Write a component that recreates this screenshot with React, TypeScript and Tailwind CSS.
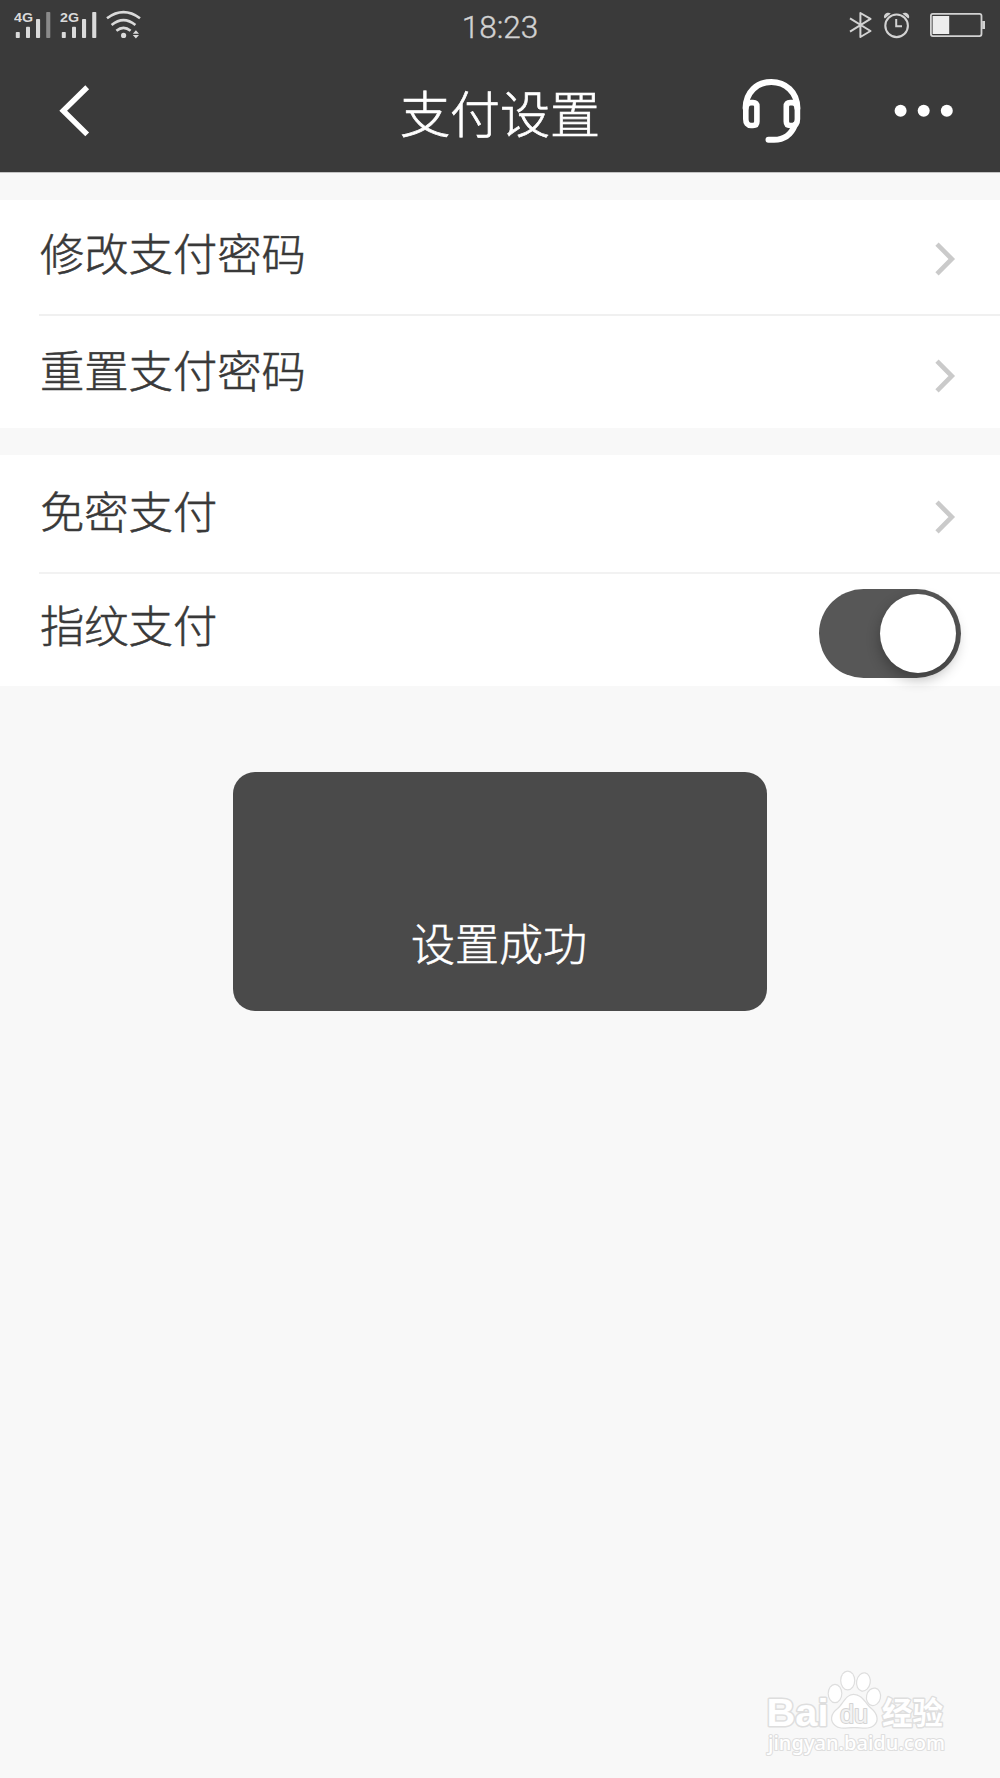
import type { ReactNode } from "react";

function Signal({ label, weakLast = false }: { label: string; weakLast?: boolean }) {
  return (
    <svg width="38" height="40" viewBox="0 0 38 40" className="shrink-0" fill="#dadada">
      <text x="0" y="22.4" fontSize="13.6" fontWeight="700" textLength="19" lengthAdjust="spacingAndGlyphs" fontFamily="Liberation Sans, Arial, sans-serif">
        {label}
      </text>
      <rect x="1.8" y="32" width="4" height="6" rx="0.8" />
      <rect x="12" y="26.7" width="4" height="11.3" rx="0.8" />
      <rect x="22" y="19" width="4.1" height="19" rx="0.8" />
      <rect x="32.2" y="12" width="4.1" height="26" rx="0.8" fill={weakLast ? "#8a8a8a" : "#dadada"} />
    </svg>
  );
}

function Wifi() {
  return (
    <svg width="36" height="40" viewBox="0 0 36 40" className="shrink-0" fill="none" stroke="#dadada" strokeWidth="2.6">
      <path d="M1 18.3Q17.5 6 34 18.3" />
      <path d="M5.6 24.9Q17.5 15.2 29.4 24.9" />
      <path d="M10.4 30.8Q17.5 25 24.6 30.8" />
      <circle cx="17.6" cy="35.4" r="2.6" fill="#dadada" stroke="none" />
      <path d="M26.8 33.8L29.9 30.2L33 33.8ZM26.8 35H33L29.9 38.6Z" fill="#dadada" stroke="none" />
    </svg>
  );
}

function Bluetooth() {
  return (
    <svg width="24" height="40" viewBox="0 0 24 40" className="shrink-0" fill="none" stroke="#d2d2d2" strokeWidth="2" strokeLinejoin="round">
      <path d="M1 18.4L21.5 31L11.4 37V13L21.5 18.9L1 31.6" />
    </svg>
  );
}

function Alarm() {
  return (
    <svg width="28" height="40" viewBox="0 0 28 40" className="shrink-0" fill="none" stroke="#d2d2d2">
      <circle cx="13.6" cy="25.8" r="11.3" strokeWidth="2.1" />
      <path d="M13.2 19V26.2H19" strokeWidth="2" />
      <path d="M1 17.5C0.6 14.2 4.4 11.6 7.8 13.5L1.9 18.6ZM26.2 17.5C26.6 14.2 22.8 11.6 19.4 13.5L25.3 18.6Z" fill="#d2d2d2" stroke="none" />
    </svg>
  );
}

function Battery() {
  return (
    <svg width="56" height="40" viewBox="0 0 56 40" className="shrink-0">
      <rect x="0.9" y="13.8" width="50.6" height="22.3" rx="2" fill="none" stroke="#d2d2d2" strokeWidth="1.8" />
      <rect x="2.6" y="16" width="16.6" height="18" fill="#ededed" />
      <rect x="52.2" y="21" width="2.8" height="8" fill="#d2d2d2" />
    </svg>
  );
}

function Headset() {
  return (
    <svg width="60" height="68" viewBox="0 0 60 68" fill="none" stroke="#fff" strokeWidth="6" strokeLinecap="round">
      <path d="M4.6 31C5 15 16 5 30.3 5S56 15 56.4 31" />
      <path d="M4.8 32C4.8 27 7 25.6 10 25.6H12Q15.9 25.6 15.9 29.5V44.5Q15.9 48.5 12 48.5H10Q4.8 48.5 4.8 42Z" strokeWidth="5.6" />
      <path d="M56.4 32C56.4 27 54 25.6 51.2 25.6H49.2Q45.3 25.6 45.3 29.5V44.5Q45.3 48.5 49.2 48.5H51.2Q56.4 48.5 56.4 42Z" strokeWidth="5.6" />
      <path d="M54 48C50 58 43 62.8 33 62.8H27.5" />
    </svg>
  );
}

function Chevron() {
  return (
    <svg width="22" height="34" viewBox="0 0 22 34" fill="none" stroke="#cacaca" strokeWidth="4.6">
      <path d="M3 2.2L17.8 17L3 31.8" />
    </svg>
  );
}

function Row({ label, className, children }: { label: string; className: string; children: ReactNode }) {
  return (
    <div className={`flex justify-between pl-[1px] ${className}`}>
      <span className="text-[44.3px] leading-[64px] [-webkit-text-stroke:0.55px_#393939]">{label}</span>
      {children}
    </div>
  );
}

function Watermark() {
  return (
    <svg
      className="absolute left-[760px] top-[1664px]"
      width="200"
      height="96"
      viewBox="0 0 200 96"
      fill="#fff"
      stroke="#dedede"
      strokeWidth="2.4"
      strokeLinejoin="round"
      paintOrder="stroke"
    >
      <text x="6.5" y="62" fontSize="38" fontWeight="700" textLength="62" lengthAdjust="spacingAndGlyphs" strokeWidth="3" fontFamily="Liberation Sans, Arial, sans-serif">
        Bai
      </text>
      <g strokeWidth="2.4">
        <ellipse cx="75" cy="29.5" rx="6.2" ry="8.6" />
        <ellipse cx="87.7" cy="16.5" rx="6.4" ry="8.8" />
        <ellipse cx="103.4" cy="18" rx="6.2" ry="8.6" transform="rotate(10 103.4 18)" />
        <ellipse cx="113.5" cy="32.8" rx="6.4" ry="8.2" transform="rotate(12 113.5 32.8)" />
        <path d="M93.5 31C102 31 105 40 111 45C117 50 118.5 57 113.5 61C109 65 102 63 94 63S80 65 75.5 61C70.5 57 71 50 78 45C84 40 86 31 93.5 31Z" />
      </g>
      <text x="80" y="58.5" fontSize="25" textLength="28" lengthAdjust="spacingAndGlyphs" fill="#f2f2f2" stroke="#d4d4d4" strokeWidth="2" fontFamily="Liberation Sans, Arial, sans-serif">
        du
      </text>
      <text x="122" y="60" fontSize="31" fontWeight="700" textLength="61" lengthAdjust="spacingAndGlyphs" strokeWidth="2.8" fontFamily="Noto Sans CJK SC, sans-serif">
        经验
      </text>
      <text x="8" y="86" fontSize="20" textLength="177" lengthAdjust="spacingAndGlyphs" strokeWidth="2.2" fontFamily="Noto Sans, sans-serif" fontWeight="500">
        jingyan.baidu.com
      </text>
    </svg>
  );
}

export default function App() {
  return (
    <div
      lang="zh-CN"
      className="relative flex h-[1778px] w-[1000px] flex-col overflow-hidden bg-[#f8f8f8] font-['Noto_Sans_CJK_SC',sans-serif] font-light text-[#393939]"
    >
      <header className="h-[173px] border-b border-[#c4c4c4] bg-[#3a3a3a] text-white">
        <div className="grid h-[50px] grid-cols-3 items-start">
          <div className="flex pl-[14px]">
            <Signal label="4G" weakLast />
            <div className="ml-[8px] flex">
              <Signal label="2G" />
            </div>
            <div className="ml-[8px] flex">
              <Wifi />
            </div>
          </div>
          <span className="pt-[9px] text-center font-['Roboto',sans-serif] text-[31.5px] leading-[38px] text-[#d2d2d2] [-webkit-text-stroke:0.4px_#d2d2d2]">
            18:23
          </span>
          <div className="flex justify-end pr-[14px]">
            <Bluetooth />
            <div className="ml-[10px] flex">
              <Alarm />
            </div>
            <div className="ml-[19px] flex">
              <Battery />
            </div>
          </div>
        </div>
        <div className="grid h-[122px] grid-cols-3">
          <div className="pl-[58px] pt-[34px]">
            <svg width="34" height="54" viewBox="0 0 34 54" fill="none" stroke="#fff" strokeWidth="5.4">
              <path d="M29.2 3.2L5.2 26.8L29.2 50.4" />
            </svg>
          </div>
          <h1 className="pt-[25px] text-center text-[50px] font-light leading-[72px] [-webkit-text-stroke:0.7px_#fff]">支付设置</h1>
          <div className="flex justify-end pr-[45px] pt-[27px]">
            <Headset />
            <svg className="ml-[92px]" width="62" height="68" viewBox="0 0 62 68" fill="#fff">
              <circle cx="7.6" cy="33.8" r="6" />
              <circle cx="30.7" cy="33.8" r="6" />
              <circle cx="53.8" cy="33.8" r="6" />
            </svg>
          </div>
        </div>
      </header>

      <main>
        <section className="mt-[27px] h-[228px] bg-white pl-[39px]">
          <Row label="修改支付密码" className="h-[116px] border-b-2 border-[#f0f0f0] pr-[44px] pt-[20px]">
            <div className="pt-[22px]">
              <Chevron />
            </div>
          </Row>
          <Row label="重置支付密码" className="h-[112px] pr-[44px] pt-[21px]">
            <div className="pt-[22px]">
              <Chevron />
            </div>
          </Row>
        </section>
        <section className="mt-[27px] h-[231px] bg-white pl-[39px]">
          <Row label="免密支付" className="h-[119px] border-b-2 border-[#f2f2f2] pr-[44px] pt-[23px]">
            <div className="pt-[22px]">
              <Chevron />
            </div>
          </Row>
          <Row label="指纹支付" className="h-[112px] pr-[39px] pt-[18px]">
            <div className="-mt-[3px] flex h-[89px] w-[142px] items-center justify-end rounded-full bg-[#575757] pr-[5px]">
              <div className="h-[79px] w-[76px] rounded-[50%] bg-white shadow-[0_6px_14px_rgba(0,0,0,0.3)]" />
            </div>
          </Row>
        </section>
      </main>

      <div className="absolute left-[233px] top-[772px] flex h-[239px] w-[534px] items-end justify-center rounded-[22px] bg-[#4a4a4a] pb-[37px] pr-[2px] text-[44px] leading-[64px] text-white [-webkit-text-stroke:0.55px_#fff]">
        设置成功
      </div>
      <Watermark />
    </div>
  );
}
